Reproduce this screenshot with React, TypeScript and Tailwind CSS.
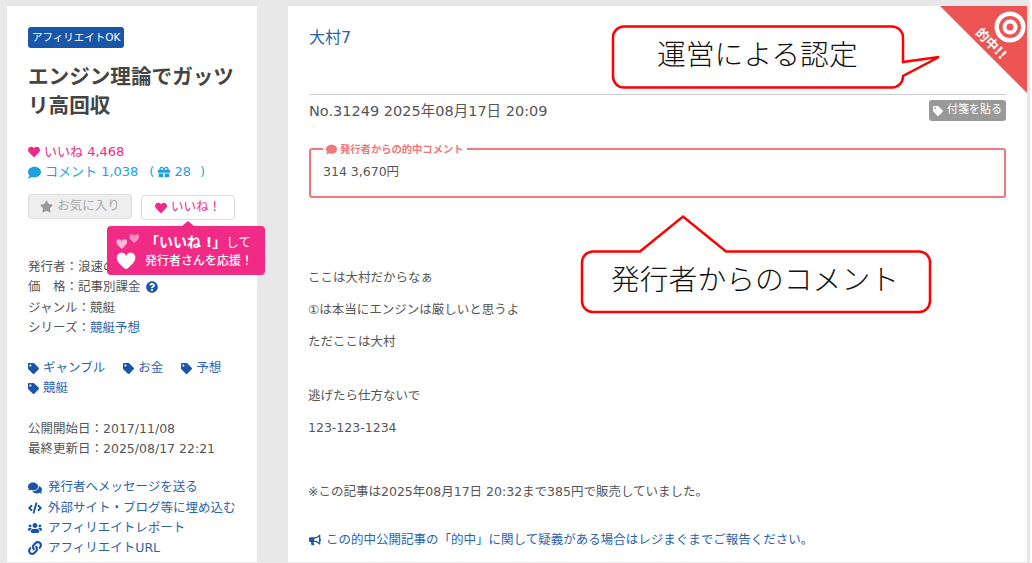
import { FaHeart, FaComment, FaGift, FaStar, FaTag, FaQuestionCircle, FaComments, FaCode, FaUsers, FaLink, FaBullhorn } from 'react-icons/fa'

const tags = ['ギャンブル', 'お金', '予想', '競艇']

const links = [
  { icon: <FaComments />, label: '発行者へメッセージを送る' },
  { icon: <FaCode />, label: '外部サイト・ブログ等に埋め込む' },
  { icon: <FaUsers />, label: 'アフィリエイトレポート' },
  { icon: <FaLink />, label: 'アフィリエイトURL' },
]

const heartPath = 'M12 21C5 15 1 11 1 7a5.5 5.5 0 0 1 11-1.5A5.5 5.5 0 0 1 23 7c0 4-4 8-11 14z'

function Sidebar() {
  return (
    <aside className="relative w-[250px] shrink-0 bg-white pl-[21px] pr-[20px] pt-[21px] text-[12.5px] leading-[20.3px] text-[#555]">
      <span className="inline-block rounded-[3px] bg-[#1a56a8] px-[4px] text-[10.5px] leading-[21px] text-white">アフィリエイトOK</span>

      <h1 className="mt-[15px] text-[20.6px] font-bold leading-[29px] text-[#444]">エンジン理論でガッツリ高回収</h1>

      <div className="mt-[21px] text-[13px] leading-[20px]">
        <p className="flex items-center gap-[4px] text-[#ee2a86]">
          <FaHeart className="text-[12px]" /> いいね 4,468
        </p>
        <p className="flex items-center gap-[4px] text-[#1f9fe0]">
          <FaComment className="text-[13px]" /> コメント 1,038
          <span className="ml-[7px]">(</span>
          <FaGift className="text-[12px]" /> 28
          <span className="ml-[5px]">)</span>
        </p>
      </div>

      <div className="mt-[12px] flex items-start gap-[9px] text-[12.5px]">
        <button className="flex h-[25px] w-[104px] items-center justify-center gap-[4px] rounded-[3px] border border-[#ddd] bg-[#eee] text-[#aaa]">
          <FaStar className="text-[13px] text-[#999]" /> お気に入り
        </button>
        <button className="mt-[1px] flex h-[25px] w-[94px] items-center justify-center gap-[4px] rounded-[3px] border border-[#ddd] bg-white text-[#ee2a86]">
          <FaHeart className="text-[12px]" /> いいね！
        </button>
      </div>

      <div className="absolute left-[100px] top-[220px] z-10 h-[49px] w-[158px] rounded-[4px] bg-[#f02a85] text-white">
        <span className="absolute left-[75px] top-[-5px] h-0 w-0 border-x-[6px] border-b-[5px] border-x-transparent border-b-[#f02a85]" />
        <svg className="absolute left-[9px] top-[7px]" width="24" height="36" viewBox="0 0 24 36">
          <path d={heartPath} fill="#f8b9d6" transform="translate(0 6) scale(0.48)" />
          <path d={heartPath} fill="#f78cbd" transform="translate(13 1) scale(0.44)" />
          <path d={heartPath} fill="#fff" transform="translate(0 19) scale(0.84)" />
        </svg>
        <p className="absolute left-[38px] top-[7px] whitespace-nowrap text-[12.5px] leading-[18px]">
          <b className="text-[14px]">「いいね !」</b>して
        </p>
        <p className="absolute left-[38px] top-[27px] whitespace-nowrap text-[12px] font-medium leading-[16px]">発行者さんを応援！</p>
      </div>

      <dl className="mt-[37px]">
        <div>発行者：浪速の</div>
        <div className="flex items-center">
          価　格：記事別課金
          <FaQuestionCircle className="ml-[5px] text-[12px] text-[#1a56a8]" />
        </div>
        <div>ジャンル：競艇</div>
        <div>
          シリーズ：<span className="text-[#2a62ad]">競艇予想</span>
        </div>
      </dl>

      <ul className="mt-[20px] flex w-[200px] flex-wrap gap-x-[18px] text-[#2a62ad]">
        {tags.map((tag) => (
          <li key={tag} className="flex items-center gap-[4px]">
            <FaTag className="text-[11px] text-[#1a56a8]" />
            {tag}
          </li>
        ))}
      </ul>

      <div className="mt-[20px]">
        <p>公開開始日：2017/11/08</p>
        <p>最終更新日：2025/08/17 22:21</p>
      </div>

      <ul className="mt-[18px] text-[#2a62ad]">
        {links.map((link) => (
          <li key={link.label} className="flex items-center">
            <span className="flex w-[20px] shrink-0 text-[14px] text-[#1a56a8]">{link.icon}</span>
            {link.label}
          </li>
        ))}
      </ul>
    </aside>
  )
}

function Ribbon() {
  return (
    <div className="absolute right-0 top-0 h-[87px] w-[87px]">
      <svg className="absolute inset-0" width="87" height="87" viewBox="0 0 87 87">
        <polygon points="0,0 87,0 87,87" fill="#ec5454" />
        <circle cx="70" cy="21" r="15.5" fill="#fff" />
        <circle cx="70" cy="21" r="11" fill="#ec5454" />
        <circle cx="70" cy="21" r="7.5" fill="#fff" />
        <circle cx="70" cy="21" r="3.5" fill="#ec5454" />
      </svg>
      <span className="absolute left-[51px] top-[38px] -translate-x-1/2 -translate-y-1/2 rotate-45 whitespace-nowrap text-[13px] font-bold leading-[14px] text-white">的中!!</span>
    </div>
  )
}

function Article() {
  return (
    <main className="relative w-[739px] shrink-0 bg-white px-[21px] pt-[21px] text-[12.5px] text-[#555]">
      <Ribbon />
      <h2 className="text-[16px] leading-[22px] text-[#2a62ad]">大村7</h2>
      <div className="mt-[45px] flex items-start justify-between border-t border-[#ccc] pt-[5px]">
        <p className="text-[14.5px] leading-[22px]">No.31249 2025年08月17日 20:09</p>
        <button className="flex h-[21px] w-[77px] items-center justify-center gap-[4px] rounded-[3px] bg-[#999] text-[11px] text-white">
          <FaTag className="text-[10px]" /> 付箋を貼る
        </button>
      </div>

      <fieldset className="mt-[21px] h-[55px] rounded-[3px] border-2 border-[#f07878] px-[12px]">
        <legend className="flex items-center gap-[3px] px-[3px] text-[10.3px] font-bold leading-[12px] text-[#f07878]">
          <FaComment className="text-[11px]" /> 発行者からの的中コメント
        </legend>
        <p className="mt-[7px] leading-[20px]">314 3,670円</p>
      </fieldset>

      <div className="-ml-[1px] mt-[70px] leading-[20px]">
        <p>ここは大村だからなぁ</p>
        <p className="mt-[12px]">①は本当にエンジンは厳しいと思うよ</p>
        <p className="mt-[12px]">ただここは大村</p>
        <p className="mt-[34px]">逃げたら仕方ないで</p>
        <p className="mt-[12px]">123-123-1234</p>
        <p className="mt-[44px]">※この記事は2025年08月17日 20:32まで385円で販売していました。</p>
        <p className="ml-[1px] mt-[28px] flex items-center gap-[5px] text-[#2a62ad]">
          <FaBullhorn className="text-[12px] text-[#1a56a8]" />
          この的中公開記事の「的中」に関して疑義がある場合はレジまぐまでご報告ください。
        </p>
      </div>
    </main>
  )
}

function Callouts() {
  return (
    <>
      <div className="absolute left-[610px] top-[24px] h-[66px] w-[332px]">
        <svg className="absolute inset-0" width="332" height="66" viewBox="0 0 332 66" fill="#fff" stroke="#f00" strokeWidth="2.5">
          <path d="M14 2.5H282a11 11 0 0 1 11 11V38L329 33L293 52v1a11 11 0 0 1 -11 10.5H14a11 11 0 0 1 -11 -11V13.5a11 11 0 0 1 11 -11z" />
        </svg>
        <span className="absolute left-[47px] top-[11px] whitespace-nowrap text-[28.8px] font-light leading-[40px] text-[#111]">運営による認定</span>
      </div>
      <div className="absolute left-[579px] top-[214px] h-[102px] w-[354px]">
        <svg className="absolute inset-0" width="354" height="102" viewBox="0 0 354 102" fill="#fff" stroke="#f00" strokeWidth="2.5">
          <path d="M14 37.5H61L104 2.5L147 37.5H340a11 11 0 0 1 11 11V87a11 11 0 0 1 -11 11H14a11 11 0 0 1 -11 -11V48.5a11 11 0 0 1 11 -11z" />
        </svg>
        <span className="absolute left-[32px] top-[46px] whitespace-nowrap text-[28.8px] font-light leading-[40px] text-[#111]">発行者からのコメント</span>
      </div>
    </>
  )
}

export default function App() {
  return (
    <div
      className="relative h-[563px] w-[1032px] overflow-hidden bg-white"
      style={{ fontFamily: '"DejaVu Sans", "Noto Sans CJK JP", sans-serif' }}
    >
      <div className="flex h-full w-[1030px] gap-[31px] bg-[#e8e8e8] pb-[1px] pl-[7px] pt-[6px]">
        <Sidebar />
        <Article />
      </div>
      <Callouts />
    </div>
  )
}
